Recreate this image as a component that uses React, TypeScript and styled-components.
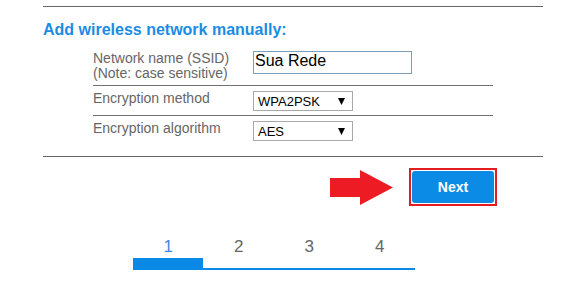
import React from "react";
import styled, { createGlobalStyle } from "styled-components";

const GlobalStyle = createGlobalStyle`
  html, body {
    margin: 0;
    padding: 0;
    background: #ffffff;
    font-family: "Liberation Sans", Arial, sans-serif;
  }
`;

const Page = styled.div`
  width: 500px;
  padding: 6px 0 0 43px;
`;

const Rule = styled.div<{ $top?: number }>`
  height: 1px;
  background: #666666;
  margin-top: ${(p) => p.$top ?? 0}px;
`;

const Heading = styled.h2`
  margin: 14px 0 0;
  font-size: 16px;
  line-height: 18px;
  font-weight: bold;
  color: #1b8ce3;
`;

const FormTable = styled.div`
  margin: 7px 0 0 50px;
  width: 400px;
`;

const Row = styled.div<{ $last?: boolean }>`
  display: grid;
  grid-template-columns: 160px 1fr;
  align-items: start;
  padding: 5px 0 ${(p) => (p.$last ? 5 : 4)}px;
  border-bottom: ${(p) => (p.$last ? "none" : "1px solid #707070")};
`;

const Label = styled.div`
  font-size: 14px;
  line-height: 15px;
  color: #666666;
`;

const TextInput = styled.input`
  box-sizing: border-box;
  width: 159px;
  height: 23px;
  margin: 0;
  padding: 0 0 3px 1px;
  border: 1px solid #7f9db9;
  font-family: "Liberation Sans", Arial, sans-serif;
  font-size: 16px;
  color: #000000;
  outline: none;
`;

const SelectWrap = styled.div`
  position: relative;
  width: 100px;
  height: 20px;
`;

const Select = styled.select`
  box-sizing: border-box;
  appearance: none;
  -webkit-appearance: none;
  width: 100px;
  height: 20px;
  margin: 0;
  padding: 0 0 0 4px;
  border: 1px solid #a9a9a9;
  border-radius: 0;
  background: #ffffff;
  font-family: "Liberation Sans", Arial, sans-serif;
  font-size: 13px;
  color: #000000;
  outline: none;
`;

const Caret = styled.svg`
  position: absolute;
  right: 8px;
  top: 7px;
  pointer-events: none;
`;

const ActionRow = styled.div`
  display: flex;
  justify-content: flex-end;
  align-items: center;
  margin-top: 11px;
  padding-right: 46px;
`;

const Arrow = styled.svg`
  margin-right: 16px;
  display: block;
`;

const Highlight = styled.div`
  display: flex;
  padding: 1px;
  border: 2px solid #e31c24;
`;

const NextButton = styled.button`
  width: 82px;
  height: 32px;
  border: none;
  border-radius: 3px;
  background: #0b8be6;
  color: #ffffff;
  font-family: "Liberation Sans", Arial, sans-serif;
  font-size: 14px;
  font-weight: bold;
  outline: none;
  cursor: pointer;
`;

const Steps = styled.div`
  margin: 31px 0 0 90px;
  width: 282px;
`;

const StepLabels = styled.div`
  display: grid;
  grid-template-columns: repeat(4, 1fr);
`;

const StepLabel = styled.div<{ $active?: boolean }>`
  text-align: center;
  font-size: 17px;
  line-height: 20px;
  color: ${(p) => (p.$active ? "#3f88de" : "#666666")};
`;

const Track = styled.div`
  display: flex;
  align-items: flex-end;
  height: 12px;
  margin-top: 1px;
`;

const TrackFill = styled.div<{ $width: number }>`
  flex: 0 0 ${(p) => p.$width}px;
  height: 12px;
  background: #0a8ae6;
`;

const TrackRest = styled.div`
  flex: 1;
  height: 2px;
  background: #0a8ae6;
`;

const CaretIcon = () => (
  <Caret width="7" height="7" viewBox="0 0 7 7">
    <polygon points="0,0 7,0 3.5,7" fill="#000" />
  </Caret>
);

const Dropdown = ({ value, options }: { value: string; options: string[] }) => (
  <SelectWrap>
    <Select defaultValue={value}>
      {options.map((o) => (
        <option key={o} value={o}>
          {o}
        </option>
      ))}
    </Select>
    <CaretIcon />
  </SelectWrap>
);

export default function App() {
  return (
    <>
      <GlobalStyle />
      <Page>
        <Rule />
        <Heading>Add wireless network manually:</Heading>
        <FormTable>
          <Row>
            <Label>
              Network name (SSID)
              <br />
              (Note: case sensitive)
            </Label>
            <TextInput defaultValue="Sua Rede" />
          </Row>
          <Row>
            <Label>Encryption method</Label>
            <Dropdown value="WPA2PSK" options={["WPA2PSK", "WPAPSK", "NONE"]} />
          </Row>
          <Row $last>
            <Label>Encryption algorithm</Label>
            <Dropdown value="AES" options={["AES", "TKIP"]} />
          </Row>
        </FormTable>
        <Rule $top={10} />
        <ActionRow>
          <Arrow width="63" height="35" viewBox="0 0 63 35">
            <rect x="0" y="8" width="31" height="19" fill="#ed1c24" />
            <polygon points="30,0 63,17.5 30,35" fill="#ed1c24" />
          </Arrow>
          <Highlight>
            <NextButton>Next</NextButton>
          </Highlight>
        </ActionRow>
        <Steps>
          <StepLabels>
            <StepLabel $active>1</StepLabel>
            <StepLabel>2</StepLabel>
            <StepLabel>3</StepLabel>
            <StepLabel>4</StepLabel>
          </StepLabels>
          <Track>
            <TrackFill $width={70} />
            <TrackRest />
          </Track>
        </Steps>
      </Page>
    </>
  );
}
